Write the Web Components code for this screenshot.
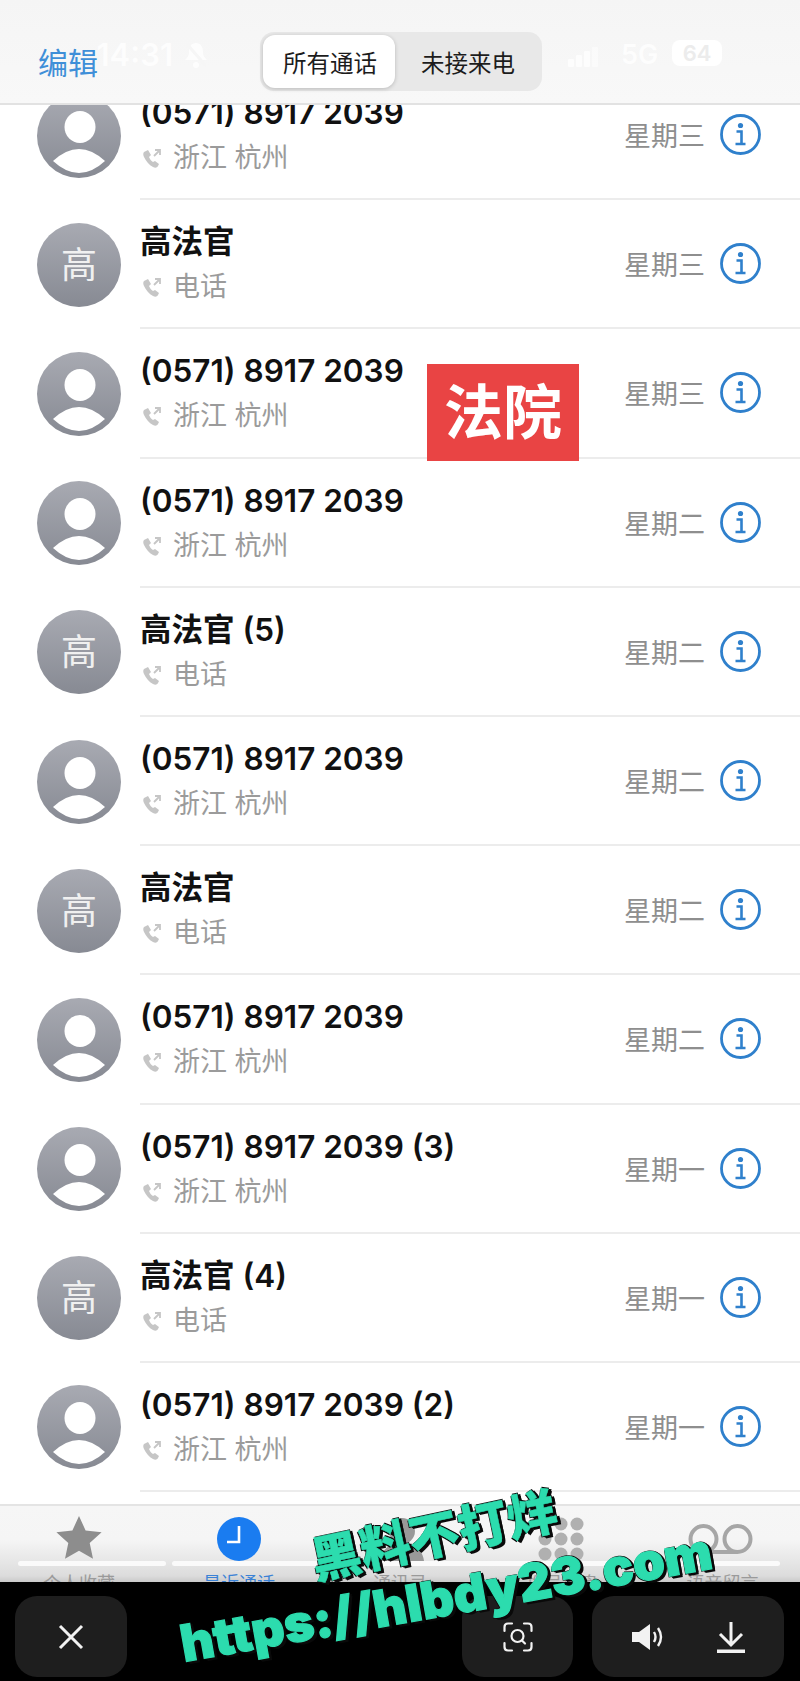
<!DOCTYPE html>
<html lang="zh">
<head>
<meta charset="utf-8">
<title>最近通话</title>
<style>
  html, body { margin: 0; padding: 0; background: #fff; }
  body { width: 800px; height: 1681px; overflow: hidden; font-family: Inter, "Noto Sans CJK SC", sans-serif; }
</style>
</head>
<body>
<phone-screen>
  <top-bar></top-bar>
  <call-list>
    <call-row day="星期三"><span slot="name">(0571) 8917 2039</span><span slot="sub">浙江 杭州</span></call-row>
    <call-row day="星期三" initial="高"><span slot="name">高法官</span><span slot="sub">电话</span></call-row>
    <call-row day="星期三"><span slot="name">(0571) 8917 2039</span><span slot="sub">浙江 杭州</span></call-row>
    <call-row day="星期二"><span slot="name">(0571) 8917 2039</span><span slot="sub">浙江 杭州</span></call-row>
    <call-row day="星期二" initial="高"><span slot="name">高法官 (5)</span><span slot="sub">电话</span></call-row>
    <call-row day="星期二"><span slot="name">(0571) 8917 2039</span><span slot="sub">浙江 杭州</span></call-row>
    <call-row day="星期二" initial="高"><span slot="name">高法官</span><span slot="sub">电话</span></call-row>
    <call-row day="星期二"><span slot="name">(0571) 8917 2039</span><span slot="sub">浙江 杭州</span></call-row>
    <call-row day="星期一"><span slot="name">(0571) 8917 2039 (3)</span><span slot="sub">浙江 杭州</span></call-row>
    <call-row day="星期一" initial="高"><span slot="name">高法官 (4)</span><span slot="sub">电话</span></call-row>
    <call-row day="星期一"><span slot="name">(0571) 8917 2039 (2)</span><span slot="sub">浙江 杭州</span></call-row>
    <red-tag slot="over">法院</red-tag>
  </call-list>
  <tab-bar></tab-bar>
  <viewer-bar></viewer-bar>
  <water-mark></water-mark>
</phone-screen>

<script>
const CJK = 'Inter, "Noto Sans CJK SC", sans-serif';

class PhoneScreen extends HTMLElement {
  constructor() {
    super();
    this.attachShadow({ mode: 'open' });
    this.shadowRoot.innerHTML = `
      <style>
        :host {
          display: flex;
          flex-direction: column;
          position: relative;
          width: 800px;
          height: 1681px;
          overflow: hidden;
          font-family: ${CJK};
          filter: blur(0.6px); /* the reference is a soft, recompressed photo */
        }
      </style>
      <slot></slot>
    `;
  }
}

class TopBar extends HTMLElement {
  constructor() {
    super();
    this.attachShadow({ mode: 'open' });
    this.shadowRoot.innerHTML = `
      <style>
        :host {
          display: flex;
          align-items: center;
          position: relative;
          z-index: 2;
          box-sizing: border-box;
          height: 105px;
          padding: 21px 0 0 38px;
          background: linear-gradient(#f5f5f5, #f8f8f8);
          border-bottom: 2px solid #e2e2e2;
        }
        .edit { position: relative; font-size: 30px; color: #3f8fd8; line-height: 1; margin-top: 1px; width: 222px; }
        .seg {
          display: flex;
          box-sizing: border-box;
          width: 282px;
          height: 59px;
          padding: 3px;
          border-radius: 14px;
          background: #e8e8e8;
          margin-top: -1px;
        }
        .seg div {
          display: flex;
          align-items: center;
          justify-content: center;
          font-size: 23.5px;
          color: #1c1c1c;
          flex: 1;
          padding: 1px 0 0 2px;
        }
        .seg .on { flex: none; width: 130px; background: #fff; border-radius: 12px; box-shadow: 0 1px 4px rgba(0,0,0,.2); }
        /* status bar ghosted through the header */
        .ghost { position: absolute; color: #fff; opacity: .8; font-weight: 600; line-height: 1; }
        .time { right: 627px; top: 39px; font-size: 31px; }
        .bell { left: 183px; top: 40px; }
        .bars { left: 568px; top: 47px; }
        .net { left: 621px; top: 41px; font-size: 27px; }
        .batt {
          left: 672px; top: 40px; width: 50px; height: 26px;
          display: flex; align-items: center; justify-content: center;
          background: #fff; border-radius: 8px; color: #ececec; font-size: 22px; opacity: 1;
        }
      </style>
      <div class="ghost time">14:31</div>
      <svg class="ghost bell" width="26" height="30" viewBox="0 0 26 30"><path d="M13 3c-5 0-7 4-7 9 0 4-2 6-4 8h22c-2-2-4-4-4-8 0-5-2-9-7-9z" fill="#fff"/><path d="M3 3l20 23" stroke="#f6f6f6" stroke-width="3"/><circle cx="13" cy="25" r="3" fill="#fff"/></svg>
      <span class="edit">编辑</span>
      <div class="seg"><div class="on">所有通话</div><div>未接来电</div></div>
      <svg class="ghost bars" width="30" height="20" viewBox="0 0 30 20" fill="#fff"><rect x="0" y="12" width="6" height="8" rx="1"/><rect x="8" y="8" width="6" height="12" rx="1"/><rect x="16" y="4" width="6" height="16" rx="1" /><rect x="24" y="0" width="6" height="20" rx="1" opacity=".6"/></svg>
      <div class="ghost net">5G</div>
      <div class="ghost batt">64</div>
    `;
  }
}

class CallList extends HTMLElement {
  constructor() {
    super();
    this.attachShadow({ mode: 'open' });
    this.shadowRoot.innerHTML = `
      <style>
        :host { display: block; position: relative; flex: 1; min-height: 0; overflow: hidden; background: #fff; }
        .rows { margin-top: -34px; }
      </style>
      <div class="rows"><slot></slot></div>
      <slot name="over"></slot>
    `;
  }
}

class CallRow extends HTMLElement {
  constructor() {
    super();
    this.attachShadow({ mode: 'open' });
    const initial = this.getAttribute('initial');
    const face = initial
      ? `<span class="initial">${initial}</span>`
      : `<svg width="84" height="84" viewBox="0 0 84 84">
           <ellipse cx="43" cy="33" rx="15.5" ry="16" fill="#fff"/>
           <path d="M16 67Q42 43 68 67Q42 91 16 67z" fill="#fff"/>
         </svg>`;
    this.shadowRoot.innerHTML = `
      <style>
        :host { display: flex; align-items: center; box-sizing: border-box; height: 129.2px; padding-left: 37px; }
        .avatar {
          flex: none;
          display: flex;
          align-items: center;
          justify-content: center;
          width: 84px;
          height: 84px;
          border-radius: 50%;
          overflow: hidden;
          background: linear-gradient(#a8aab2, #878a93);
        }
        .initial { font-size: 36px; color: #f0f0f0; line-height: 1; }
        .body {
          flex: 1;
          align-self: stretch;
          display: flex;
          align-items: center;
          margin-left: 19px;
          padding-right: 39px;
          border-bottom: 2px solid #ececec;
        }
        .text { flex: 1; display: flex; flex-direction: column; margin-top: 1px; }
        .name { font-size: 31.5px; font-weight: 600; color: #111; line-height: 38px; letter-spacing: 0; }
        .sub { display: flex; align-items: center; font-size: 27px; color: #9b9b9b; line-height: 36px; margin-top: 8px; padding-left: 2px; }
        .sub svg { margin-right: 11px; }
        .day { font-size: 27px; color: #8e8e8e; margin-right: 15px; }
        .info { flex: none; }
      </style>
      <div class="avatar">${face}</div>
      <div class="body">
        <div class="text">
          <div class="name"><slot name="name"></slot></div>
          <div class="sub">
            <svg width="20" height="22" viewBox="0 0 20 22"><path d="M2 5c-1 1-1 3 0 5 2 4 5 8 9 10 2 1 4 1 5-1l1-2-4-3-2 1c-2-1-3-3-4-5l2-2-3-5z" fill="#c6c6c6"/><path d="M12 9l6-6M13 3h5v5" fill="none" stroke="#c6c6c6" stroke-width="1.8"/></svg>
            <slot name="sub"></slot>
          </div>
        </div>
        <span class="day">${this.getAttribute('day')}</span>
        <svg class="info" width="41" height="41" viewBox="0 0 41 41">
          <circle cx="20.5" cy="20.5" r="19" fill="none" stroke="#2f80cc" stroke-width="2.8"/>
          <circle cx="20.5" cy="11.5" r="2.6" fill="#2f80cc"/>
          <path d="M16.5 17.5h5v12M15.5 30h10" fill="none" stroke="#2f80cc" stroke-width="2.6"/>
        </svg>
      </div>
    `;
  }
}

class RedTag extends HTMLElement {
  constructor() {
    super();
    this.attachShadow({ mode: 'open' });
    this.shadowRoot.innerHTML = `
      <style>
        :host {
          display: flex;
          align-items: center;
          justify-content: center;
          position: absolute;
          left: 427px;
          top: 259px;
          width: 152px;
          height: 97px;
          background: #e94444;
          color: #fff;
          font-size: 59px;
          font-weight: 700;
          line-height: 1;
        }
      </style>
      <slot></slot>
    `;
  }
}

class TabBar extends HTMLElement {
  constructor() {
    super();
    this.attachShadow({ mode: 'open' });
    const tabs = [
      ['个人收藏', `<path d="M24 1l6.600 14.500 16 1.800-11.900 10.700 3.300 15.700L24 35.800 10 43.700l3.300-15.700L1.400 17.300l16-1.800z" fill="#8d8d8d"/>`],
      ['最近通话', `<circle cx="24" cy="24" r="22" fill="#1a7cf0"/><path d="M24 11v16H12" fill="none" stroke="#fff" stroke-width="2.600"/>`],
      ['通讯录', `<circle cx="26" cy="16" r="13" fill="#999"/><path d="M4 46c2-14 12-18 22-18s20 4 22 18z" fill="#999"/>`],
      ['拨号键盘', [6, 22, 38].flatMap(x => [9, 24, 39].map(y => `<circle cx="${x}" cy="${y}" r="6.500" fill="#b0b0b0"/>`)).join('')],
      ['语音留言', `<circle cx="4.500" cy="24" r="13" fill="none" stroke="#a6a6a6" stroke-width="4"/><circle cx="38.500" cy="24" r="13" fill="none" stroke="#a6a6a6" stroke-width="4"/><path d="M4.500 37h34" stroke="#a6a6a6" stroke-width="4"/>`]
    ];
    this.shadowRoot.innerHTML = `
      <style>
        :host {
          display: block;
          position: relative;
          box-sizing: border-box;
          height: 78px;
          overflow: hidden;
          background: linear-gradient(#f6f6f6 0, #f5f5f5 45%, #dcdcdc 92%, #c9c9c9 100%);
          border-top: 2px solid #e4e4e4;
        }
        .tabs { display: grid; grid-template-columns: 158px 162px 160px 165px 155px; }
        .tab { display: flex; flex-direction: column; align-items: center; padding-top: 9px; font-size: 18px; line-height: 22px; color: #9a9a9a; }
        .tab svg { overflow: visible; margin-bottom: 10px; }
        .tab.on { color: #3b82d6; }
        .strip { position: absolute; left: 18px; right: 20px; top: 55px; display: flex; gap: 6px; }
        .strip i { flex: 1; height: 5px; border-radius: 3px; background: rgba(255,255,255,.8); }
        .strip i:first-child { flex: none; width: 148px; }
      </style>
      <div class="tabs">
        ${tabs.map((t, i) => `<div class="tab${i === 1 ? ' on' : ''}"><svg width="48" height="48" viewBox="0 0 48 48">${t[1]}</svg>${t[0]}</div>`).join('')}
      </div>
      <div class="strip"><i></i><i></i></div>
    `;
  }
}

class ViewerBar extends HTMLElement {
  constructor() {
    super();
    this.attachShadow({ mode: 'open' });
    this.shadowRoot.innerHTML = `
      <style>
        :host {
          display: flex;
          flex: none;
          box-sizing: border-box;
          height: 99px;
          padding: 14px 16px 4px 15px;
          background: #000;
        }
        .btn {
          display: flex;
          align-items: center;
          justify-content: center;
          background: #1e1e1e;
          border-radius: 22px;
        }
        .close { width: 112px; margin-right: auto; }
        .scan { width: 111px; margin-right: 19px; }
        .group { width: 192px; gap: 51px; }
        svg { fill: none; stroke: #f2f2f2; }
      </style>
      <div class="btn close">
        <svg width="28" height="28" viewBox="0 0 28 28" stroke-width="3"><path d="M3 3l22 22M25 3L3 25"/></svg>
      </div>
      <div class="btn scan">
        <svg width="30" height="30" viewBox="0 0 30 30" stroke-width="2.2" stroke-linecap="round">
          <path d="M9 1.5H5Q1.5 1.5 1.5 5v4M21 1.5h4q3.500 0 3.500 3.500v4M1.500 21v4q0 3.500 3.500 3.500h4M28.500 21v4q0 3.500-3.500 3.500h-4"/>
          <circle cx="14.500" cy="14" r="6"/><path d="M19 18.500l3 3"/>
        </svg>
      </div>
      <div class="btn group">
        <svg width="34" height="28" viewBox="0 0 34 28">
          <path d="M1 9h7L19 1v26L8 19H1z" fill="#f2f2f2" stroke="none"/>
          <path d="M23 9q3 5 0 10M27 5q6 9 0 18" stroke-width="2.400"/>
        </svg>
        <svg width="30" height="32" viewBox="0 0 30 32" stroke-width="3">
          <path d="M15 1v22M4 13l11 11 11-11"/><path d="M1 30.500h28" stroke-width="4"/>
        </svg>
      </div>
    `;
  }
}

class WaterMark extends HTMLElement {
  constructor() {
    super();
    this.attachShadow({ mode: 'open' });
    this.shadowRoot.innerHTML = `
      <style>
        :host { display: block; position: absolute; inset: 0; pointer-events: none; }
        div {
          position: absolute;
          white-space: nowrap;
          line-height: 1;
          color: #2cdcae;
          text-shadow: 2px 2px 0 #0a0a0a, 3px 3px 0 #0a0a0a, -1px 1px 0 #0a0a0a, 1px -1px 0 #0a0a0a, 3px 1px 0 #0a0a0a;
        }
        .cn {
          left: 434px;
          top: 1536px;
          font-size: 50px;
          font-weight: 900;
          -webkit-text-stroke: .5px #2cdcae;
          transform: translate(-50%, -50%) rotate(-12deg);
        }
        .url {
          left: 446px;
          top: 1597px;
          font-size: 51px;
          font-weight: 900;
          -webkit-text-stroke: 1.2px #2cdcae;
          transform: translate(-50%, -50%) rotate(-10deg);
        }
      </style>
      <div class="cn">黑料不打烊</div>
      <div class="url">https://hlbdy23.com</div>
    `;
  }
}

customElements.define('phone-screen', PhoneScreen);
customElements.define('top-bar', TopBar);
customElements.define('call-list', CallList);
customElements.define('call-row', CallRow);
customElements.define('red-tag', RedTag);
customElements.define('tab-bar', TabBar);
customElements.define('viewer-bar', ViewerBar);
customElements.define('water-mark', WaterMark);
</script>
</body>
</html>
